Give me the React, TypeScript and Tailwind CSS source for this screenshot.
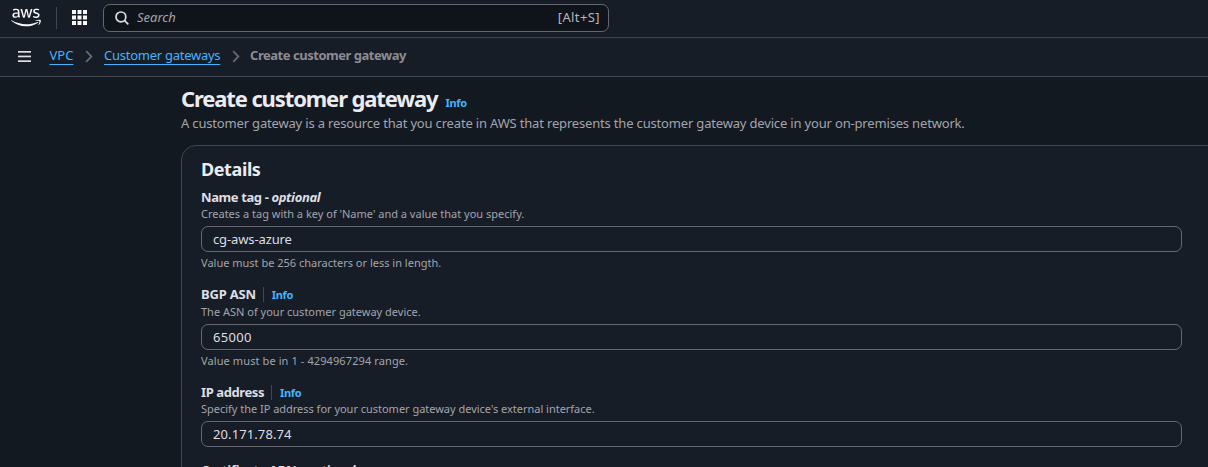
import React from 'react';

function AwsLogo() {
  return (
    <svg width="30" height="19" viewBox="0 0 304 182" fill="none" className="block">
      <path
        fill="#f9f9fa"
        d="M86.4,66.4c0,3.7,0.4,6.7,1.1,8.9c0.8,2.2,1.8,4.6,3.2,7.2c0.5,0.8,0.7,1.6,0.7,2.3c0,1-0.6,2-1.9,3l-6.3,4.2c-0.9,0.6-1.8,0.9-2.6,0.9c-1,0-2-0.5-3-1.4C76.2,90,75,88.4,74,86.8c-1-1.7-2-3.6-3.1-5.9c-7.8,9.2-17.6,13.8-29.4,13.8c-8.4,0-15.1-2.4-20-7.2c-4.9-4.8-7.4-11.2-7.4-19.2c0-8.5,3-15.4,9.1-20.6c6.1-5.2,14.2-7.8,24.5-7.8c3.4,0,6.9,0.3,10.6,0.8c3.7,0.5,7.5,1.3,11.5,2.2v-7.3c0-7.6-1.6-12.9-4.7-16c-3.2-3.1-8.6-4.6-16.3-4.6c-3.5,0-7.1,0.4-10.8,1.3c-3.7,0.9-7.3,2-10.8,3.4c-1.6,0.7-2.8,1.1-3.5,1.3c-0.7,0.2-1.2,0.3-1.6,0.3c-1.4,0-2.1-1-2.1-3.1v-4.9c0-1.6,0.2-2.8,0.7-3.5c0.5-0.7,1.4-1.4,2.8-2.1c3.5-1.8,7.7-3.3,12.6-4.5c4.9-1.3,10.1-1.9,15.6-1.9c11.9,0,20.6,2.7,26.2,8.1c5.5,5.4,8.3,13.6,8.3,24.6V66.4z M45.8,81.6c3.3,0,6.7-0.6,10.3-1.8c3.6-1.2,6.8-3.4,9.5-6.4c1.6-1.9,2.8-4,3.4-6.4c0.6-2.4,1-5.3,1-8.7v-4.2c-2.9-0.7-6-1.3-9.2-1.7c-3.2-0.4-6.3-0.6-9.4-0.6c-6.7,0-11.6,1.3-14.9,4c-3.3,2.7-4.9,6.5-4.9,11.5c0,4.7,1.2,8.2,3.7,10.6C37.7,80.4,41.2,81.6,45.8,81.6z M126.1,92.4c-1.8,0-3-0.3-3.8-1c-0.8-0.6-1.5-2-2.1-3.9L96.7,10.2c-0.6-2-0.9-3.3-0.9-4c0-1.6,0.8-2.5,2.4-2.5h9.8c1.9,0,3.2,0.3,3.9,1c0.8,0.6,1.4,2,2,3.9l16.8,66.2l15.6-66.2c0.5-2,1.1-3.3,1.9-3.9c0.8-0.6,2.2-1,4-1h8c1.9,0,3.2,0.3,4,1c0.8,0.6,1.5,2,1.9,3.9l15.8,67l17.3-67c0.6-2,1.3-3.3,2-3.9c0.8-0.6,2.1-1,3.9-1h9.3c1.6,0,2.5,0.8,2.5,2.5c0,0.5-0.1,1-0.2,1.6c-0.1,0.6-0.3,1.4-0.7,2.5l-24.1,77.3c-0.6,2-1.3,3.3-2.1,3.9c-0.8,0.6-2.1,1-3.8,1h-8.6c-1.9,0-3.2-0.3-4-1c-0.8-0.7-1.5-2-1.9-4L156,23l-15.4,64.4c-0.5,2-1.1,3.3-1.9,4c-0.8,0.7-2.2,1-4,1H126.1z M254.6,95.1c-5.2,0-10.4-0.6-15.4-1.8c-5-1.2-8.9-2.5-11.5-4c-1.6-0.9-2.7-1.9-3.1-2.8c-0.4-0.9-0.6-1.9-0.6-2.8v-5.1c0-2.1,0.8-3.1,2.3-3.1c0.6,0,1.2,0.1,1.8,0.3c0.6,0.2,1.5,0.6,2.5,1c3.4,1.5,7.1,2.7,11,3.5c4,0.8,7.9,1.2,11.9,1.2c6.3,0,11.2-1.1,14.6-3.3c3.4-2.2,5.2-5.4,5.2-9.5c0-2.8-0.9-5.1-2.7-7c-1.8-1.9-5.2-3.6-10.1-5.2L246,52c-7.3-2.3-12.7-5.7-16-10.2c-3.3-4.4-5-9.3-5-14.5c0-4.2,0.9-7.9,2.7-11.1c1.8-3.2,4.2-6,7.2-8.2c3-2.3,6.4-4,10.4-5.2c4-1.2,8.2-1.7,12.6-1.7c2.2,0,4.5,0.1,6.7,0.4c2.3,0.3,4.4,0.7,6.5,1.1c2,0.5,3.9,1,5.7,1.6c1.8,0.6,3.2,1.2,4.2,1.8c1.4,0.8,2.4,1.6,3,2.5c0.6,0.8,0.9,1.9,0.9,3.3v4.7c0,2.1-0.8,3.2-2.3,3.2c-0.8,0-2.1-0.4-3.8-1.2c-5.7-2.6-12.1-3.9-19.2-3.9c-5.7,0-10.2,0.9-13.3,2.8c-3.1,1.9-4.7,4.8-4.7,8.9c0,2.8,1,5.2,3,7.1c2,1.9,5.7,3.8,11,5.5l14.2,4.5c7.2,2.3,12.4,5.5,15.5,9.6c3.1,4.1,4.6,8.8,4.6,14c0,4.3-0.9,8.2-2.6,11.6c-1.8,3.4-4.2,6.4-7.3,8.8c-3.1,2.5-6.8,4.3-11.1,5.6C264.4,94.4,259.7,95.1,254.6,95.1z"
      />
      <path
        fill="#f9f9fa"
        d="M273.5,143.7c-32.9,24.3-80.7,37.2-121.8,37.2c-57.6,0-109.5-21.3-148.7-56.7c-3.1-2.8-0.3-6.6,3.4-4.4c42.4,24.6,94.7,39.5,148.8,39.5c36.5,0,76.6-7.6,113.5-23.2C274.2,133.6,278.9,139.7,273.5,143.7z M287.2,128.1c-4.2-5.4-27.8-2.6-38.5-1.3c-3.2,0.4-3.7-2.4-0.8-4.5c18.8-13.2,49.7-9.4,53.3-5c3.6,4.5-1,35.4-18.6,50.2c-2.7,2.3-5.3,1.1-4.1-1.9C282.5,155.7,291.4,133.4,287.2,128.1z"
      />
    </svg>
  );
}

function GridIcon() {
  const cells = [0, 5.5, 11];
  return (
    <svg width="15" height="15" viewBox="0 0 15 15" fill="#f9f9fa" className="block">
      {cells.map((y) => cells.map((x) => <rect key={`${x}-${y}`} x={x} y={y} width="4" height="4" />))}
    </svg>
  );
}

function Chevron() {
  return (
    <svg width="8" height="13" viewBox="0 0 8 13" fill="none" stroke="#656871" strokeWidth="1.8" className="block">
      <path d="M1.2 1.2 L6.4 6.5 L1.2 11.8" />
    </svg>
  );
}

interface FieldProps {
  label: string;
  labelClass: string;
  labelRowClass: string;
  optional?: boolean;
  description: string;
  descriptionClass: string;
  value: string;
  valueClass: string;
  hint?: string;
  hintClass?: string;
  className: string;
}

function Field(p: FieldProps) {
  return (
    <div className={p.className}>
      <div className={`flex items-start whitespace-nowrap text-[13px] leading-[18px] font-bold text-[#dedee3] ${p.labelRowClass}`}>
        <span className={p.labelClass}>{p.label}</span>
        {p.optional ? (
          <span className="ml-[3px] tracking-[-0.35px]">
            - <i>optional</i>
          </span>
        ) : (
          <span className="mt-[1.5px] ml-[7px] flex h-[15px] items-center border-l border-[#424650] pl-2 text-[11px] leading-[15px] tracking-[-0.35px] text-[#42b4ff]">
            Info
          </span>
        )}
      </div>
      <div className="h-[15px] whitespace-nowrap text-[11px] leading-[15px] text-[#a4a4ad]">
        <span className={p.descriptionClass}>{p.description}</span>
      </div>
      <div className="mt-[5px] flex h-[26px] w-[981px] items-center rounded-[7px] border border-[#656871] pl-[11px] text-[13px] leading-[18px] text-[#dedee3]">
        <span className={p.valueClass}>{p.value}</span>
      </div>
      {p.hint && (
        <div className="mt-[3px] h-[15px] whitespace-nowrap text-[11px] leading-[15px] text-[#a4a4ad]">
          <span className={p.hintClass}>{p.hint}</span>
        </div>
      )}
    </div>
  );
}

export default function App() {
  return (
    <div className="flex h-[467px] w-[1208px] flex-col overflow-hidden bg-[#131920] font-['Noto_Sans',sans-serif]">
      <header className="flex h-[38px] shrink-0 items-start border-b border-[#424650] bg-[#161d26]">
        <div className="mt-[8px] ml-[11px] w-[30px]">
          <AwsLogo />
        </div>
        <div className="mt-[7px] ml-[15px] h-[22px] w-px bg-[#424650]" />
        <div className="mt-[10px] ml-[15px]">
          <GridIcon />
        </div>
        <div className="mt-[4px] ml-[16px] flex h-[28px] w-[506px] items-center rounded-[7px] border border-[#656871] bg-[#0f141a] pr-[8px] pl-[11px] text-[13px] leading-[18px] text-[#a4a4ad]">
          <svg width="14" height="14" viewBox="0 0 14 14" fill="none" stroke="#dedee3" strokeWidth="1.7">
            <circle cx="5.9" cy="5.9" r="4.9" />
            <path d="M9.4 9.4 L13.3 13.3" />
          </svg>
          <span className="mb-[2px] ml-[8px] italic">Search</span>
          <span className="mb-[2px] ml-auto tracking-[0.4px] text-[#b6b6bf]">[Alt+S]</span>
        </div>
      </header>

      <nav className="flex h-[39px] shrink-0 items-center border-b border-[#424650] bg-[#161d26] text-[13px] leading-[18px] whitespace-nowrap">
        <svg width="13" height="11" viewBox="0 0 13 11" fill="#dedee3" className="mb-px ml-[18px]">
          <rect width="13" height="1.7" y="0" />
          <rect width="13" height="1.7" y="4.6" />
          <rect width="13" height="1.7" y="9.3" />
        </svg>
        <span className="mb-[4px] ml-[18.5px] w-[24.5px] text-[#42b4ff] underline decoration-1 underline-offset-[4px]">VPC</span>
        <span className="mb-px ml-[11px]"><Chevron /></span>
        <span className="mb-[4px] ml-[11px] w-[117px] tracking-[-0.26px] text-[#42b4ff] underline decoration-1 underline-offset-[4px]">Customer gateways</span>
        <span className="mb-px ml-[11px]"><Chevron /></span>
        <span className="mb-[4px] ml-[10px] font-bold tracking-[-0.47px] text-[#8c8c94]">Create customer gateway</span>
      </nav>

      <main className="flex flex-1 flex-col pl-[181px]">
        <div className="mt-[7px] flex h-[30px] items-baseline whitespace-nowrap">
          <h1 className="text-[22px] leading-[28px] font-bold tracking-[-1.12px] text-[#ebebf0]">Create customer gateway</h1>
          <span className="ml-[8px] text-[11px] font-bold tracking-[-0.35px] text-[#42b4ff]">Info</span>
        </div>
        <p className="h-[18px] text-[13px] leading-[18px] tracking-[-0.172px] whitespace-nowrap text-[#a4a4ad]">
          A customer gateway is a resource that you create in AWS that represents the customer gateway device in your on-premises network.
        </p>
        <section className="mt-[13px] h-[330px] w-[1040px] shrink-0 rounded-tl-[15px] border border-[#424650] bg-[#161d26] pl-[19px]">
          <h2 className="mt-[11px] h-[24px] text-[18px] leading-[24px] font-bold tracking-[-0.4px] text-[#ebebf0]">Details</h2>
          <Field
            className="mt-[7px]"
            label="Name tag"
            labelClass="tracking-[-0.4px]"
            labelRowClass="h-[18px]"
            optional
            description="Creates a tag with a key of 'Name' and a value that you specify."
            descriptionClass=""
            value="cg-aws-azure"
            valueClass="tracking-[-0.12px]"
            hint="Value must be 256 characters or less in length."
            hintClass=""
          />
          <Field
            className="mt-[15px]"
            label="BGP ASN"
            labelClass="tracking-[-0.2px]"
            labelRowClass="h-[19px]"
            description="The ASN of your customer gateway device."
            descriptionClass=""
            value="65000"
            valueClass="mb-px tracking-[0.3px]"
            hint="Value must be in 1 - 4294967294 range."
            hintClass="tracking-[0.1px]"
          />
          <Field
            className="mt-[15px]"
            label="IP address"
            labelClass="tracking-[-0.4px]"
            labelRowClass="h-[18px]"
            description="Specify the IP address for your customer gateway device's external interface."
            descriptionClass="tracking-[-0.02px]"
            value="20.171.78.74"
            valueClass="tracking-[0.1px]"
          />
          <div className="mt-[14px] text-[13px] leading-[18px] font-bold tracking-[-0.3px] text-[#dedee3]">
            Certificate ARN <span className="tracking-[-0.35px]">- <i>optional</i></span>
          </div>
        </section>
      </main>
    </div>
  );
}
